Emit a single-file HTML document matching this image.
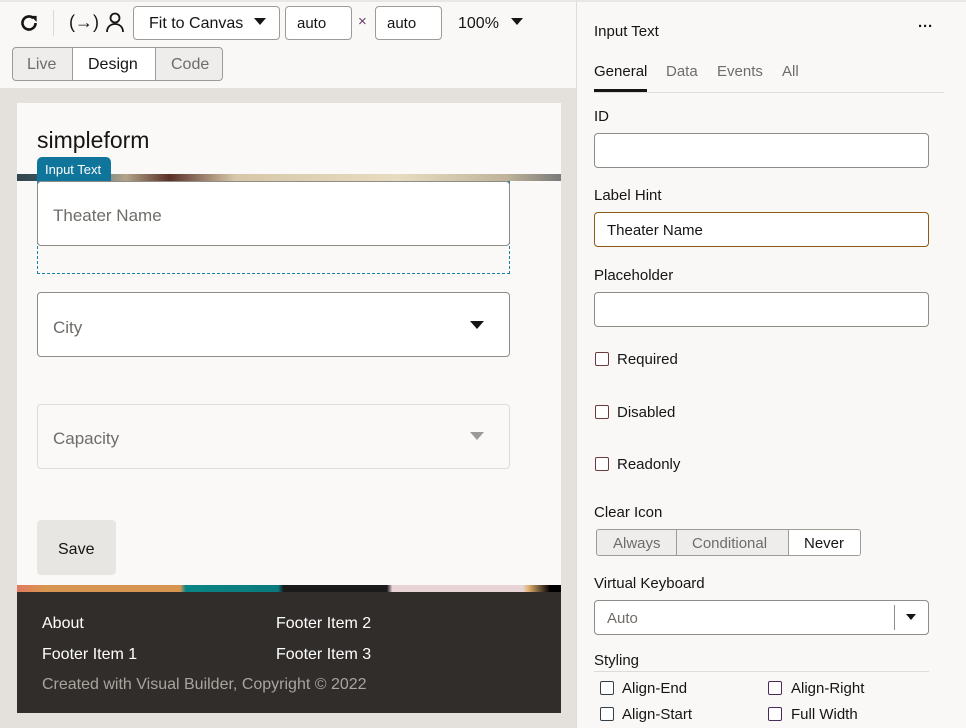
<!DOCTYPE html>
<html><head><meta charset="utf-8"><style>
*{box-sizing:border-box;margin:0;padding:0}
body{width:966px;height:728px;overflow:hidden;font-family:"Liberation Sans",sans-serif;background:#e4e1dc;position:relative;color:#161513}
.a{position:absolute}
.inp{position:absolute;background:#fff;border:1px solid #8f8c88;border-radius:4px}
.t{position:absolute;white-space:nowrap;margin-top:1px}
.cb{position:absolute;width:14px;height:14px;border:1.5px solid #6b3a3a;border-radius:2px;background:#fff}
.cbl{position:absolute;font-size:15px;color:#161513;white-space:nowrap;margin-top:1px}
</style></head><body>
<!-- toolbar -->
<div class="a" style="left:0;top:0;width:576px;height:88px;background:#f9f8f6;border-top:2px solid #e9e7e4"></div>
<svg class="a" style="left:17px;top:11px" width="24" height="24" viewBox="0 0 22 22"><path d="M17 11a6 6 0 1 1-2-4.5" fill="none" stroke="#161513" stroke-width="2.4"/><path d="M12.5 4.5h5.5v5.5z" fill="#161513"/></svg>
<div class="a" style="left:53px;top:10px;width:1px;height:26px;background:#dcd9d5"></div>
<div class="t" style="left:69px;top:11px;font-size:18px">(→)</div>
<svg class="a" style="left:105px;top:11px" width="20" height="22" viewBox="0 0 20 22"><circle cx="10" cy="7" r="4.5" fill="none" stroke="#161513" stroke-width="1.8"/><path d="M2 21c0-5 3.5-8 8-8s8 3 8 8" fill="none" stroke="#161513" stroke-width="1.8"/></svg>
<div class="inp" style="left:133px;top:6px;width:147px;height:34px;border-color:#9e9b97"></div>
<div class="t" style="left:149px;top:14px;font-size:16px">Fit to Canvas</div>
<div class="a" style="left:254px;top:18px;border-left:6px solid transparent;border-right:6px solid transparent;border-top:7px solid #161513"></div>
<div class="inp" style="left:285px;top:6px;width:67px;height:34px;border-color:#9e9b97"></div>
<div class="t" style="left:297px;top:14px;font-size:15px">auto</div>
<div class="t" style="left:358px;top:12px;font-size:15px;color:#6b3a6b">×</div>
<div class="inp" style="left:375px;top:6px;width:67px;height:34px;border-color:#9e9b97"></div>
<div class="t" style="left:387px;top:14px;font-size:15px">auto</div>
<div class="t" style="left:458px;top:14px;font-size:16px">100%</div>
<div class="a" style="left:511px;top:18px;border-left:6px solid transparent;border-right:6px solid transparent;border-top:7px solid #161513"></div>
<div class="a" style="left:12px;top:47px;width:211px;height:34px;border:1px solid #9e9b97;border-radius:4px;background:#eeedeb;overflow:hidden">
<div class="a" style="left:59px;top:0;width:84px;height:32px;background:#fff;border-left:1px solid #9e9b97;border-right:1px solid #9e9b97"></div>
<div class="t" style="left:14px;top:7px;font-size:16px;color:#6f6c68">Live</div>
<div class="t" style="left:75px;top:7px;font-size:16px">Design</div>
<div class="t" style="left:158px;top:7px;font-size:16px;color:#6f6c68">Code</div>
</div>
<!-- canvas -->
<div class="a" style="left:17px;top:103px;width:544px;height:610px;background:#faf9f7"></div>
<div class="t" style="left:37px;top:126px;font-size:23px">simpleform</div>
<div class="a" style="left:17px;top:174px;width:544px;height:7px;background:linear-gradient(90deg,#33444c 0%,#4a6d7a 12%,#b3a489 20%,#5a3028 28%,#d6c7a8 40%,#e8dcc0 70%,#bfb39a 90%,#7a7a7a 100%)"></div>
<div class="a" style="left:37px;top:157px;width:74px;height:24px;background:#10759b;border-radius:5px 5px 0 0"></div>
<div class="t" style="left:45px;top:161px;font-size:13px;color:#fff">Input Text</div>
<div class="a" style="left:37px;top:181px;width:473px;height:93px;border:1px dashed #1a82a8"></div>
<div class="inp" style="left:37px;top:181px;width:473px;height:65px"></div>
<div class="t" style="left:53px;top:205px;font-size:17px;color:#6f6c68">Theater Name</div>
<div class="inp" style="left:37px;top:292px;width:473px;height:65px"></div>
<div class="t" style="left:53px;top:317px;font-size:17px;color:#6f6c68">City</div>
<div class="a" style="left:470px;top:321px;border-left:7px solid transparent;border-right:7px solid transparent;border-top:8px solid #161513"></div>
<div class="a" style="left:37px;top:404px;width:473px;height:65px;border:1px solid #dedcd9;border-radius:4px;background:#faf9f7"></div>
<div class="t" style="left:53px;top:428px;font-size:17px;color:#6f6c68">Capacity</div>
<div class="a" style="left:470px;top:432px;border-left:7px solid transparent;border-right:7px solid transparent;border-top:8px solid #9c9a97"></div>
<div class="a" style="left:37px;top:520px;width:79px;height:55px;background:#e8e6e3;border-radius:4px"></div>
<div class="t" style="left:58px;top:540px;font-size:16px">Save</div>
<div class="a" style="left:17px;top:585px;width:544px;height:8px;background:linear-gradient(90deg,#e07a5f 0%,#d89550 5%,#d89550 30%,#0a8585 31%,#0a7a7d 48%,#1a1a1a 49%,#1a1a1a 68%,#e8d3d6 69%,#e8d3d6 93%,#e0b070 94%,#000 98%)"></div>
<div class="a" style="left:17px;top:592px;width:544px;height:121px;background:#312d2a"></div>
<div class="t" style="left:42px;top:614px;font-size:16px;color:#fff">About</div>
<div class="t" style="left:276px;top:614px;font-size:16px;color:#fff">Footer Item 2</div>
<div class="t" style="left:42px;top:645px;font-size:16px;color:#fff">Footer Item 1</div>
<div class="t" style="left:276px;top:645px;font-size:16px;color:#fff">Footer Item 3</div>
<div class="t" style="left:42px;top:675px;font-size:16px;color:#a8a49f">Created with Visual Builder, Copyright © 2022</div>
<!-- right panel -->
<div class="a" style="left:576px;top:0;width:390px;height:728px;background:#f9f8f6;border-left:1px solid #e0ddd9;border-top:2px solid #e9e7e4"></div>
<div class="t" style="left:594px;top:22px;font-size:15px">Input Text</div>
<div class="t" style="left:918px;top:17px;font-size:15px;font-weight:bold">···</div>
<div class="t" style="left:594px;top:62px;font-size:15px">General</div>
<div class="t" style="left:666px;top:62px;font-size:15px;color:#6f6c68">Data</div>
<div class="t" style="left:717px;top:62px;font-size:15px;color:#6f6c68">Events</div>
<div class="t" style="left:782px;top:62px;font-size:15px;color:#6f6c68">All</div>
<div class="a" style="left:594px;top:92px;width:350px;height:1px;background:#dedcd9"></div>
<div class="a" style="left:594px;top:89px;width:53px;height:3px;background:#161513"></div>
<div class="t" style="left:594px;top:107px;font-size:15px">ID</div>
<div class="inp" style="left:594px;top:133px;width:335px;height:35px"></div>
<div class="t" style="left:594px;top:186px;font-size:15px">Label Hint</div>
<div class="inp" style="left:594px;top:212px;width:335px;height:35px;border-color:#8c5a14"></div>
<div class="t" style="left:607px;top:221px;font-size:15px">Theater Name</div>
<div class="t" style="left:594px;top:266px;font-size:15px">Placeholder</div>
<div class="inp" style="left:594px;top:292px;width:335px;height:35px"></div>
<div class="cb" style="left:595px;top:352px"></div><div class="cbl" style="left:617px;top:350px">Required</div>
<div class="cb" style="left:595px;top:405px"></div><div class="cbl" style="left:617px;top:403px">Disabled</div>
<div class="cb" style="left:595px;top:457px"></div><div class="cbl" style="left:617px;top:455px">Readonly</div>
<div class="t" style="left:594px;top:503px;font-size:15px">Clear Icon</div>
<div class="a" style="left:596px;top:529px;width:265px;height:27px;border:1px solid #9e9b97;border-radius:3px;background:#eeedeb;overflow:hidden">
<div class="a" style="left:79px;top:0;width:113px;height:25px;border-left:1px solid #9e9b97;border-right:1px solid #9e9b97"></div>
<div class="a" style="left:192px;top:0;width:72px;height:25px;background:#fff"></div>
<div class="t" style="left:16px;top:4px;font-size:15px;color:#6f6c68">Always</div>
<div class="t" style="left:95px;top:4px;font-size:15px;color:#6f6c68">Conditional</div>
<div class="t" style="left:207px;top:4px;font-size:15px">Never</div>
</div>
<div class="t" style="left:594px;top:574px;font-size:15px">Virtual Keyboard</div>
<div class="inp" style="left:594px;top:600px;width:335px;height:35px"></div>
<div class="t" style="left:607px;top:609px;font-size:15px;color:#6f6c68">Auto</div>
<div class="a" style="left:894px;top:605px;width:1px;height:25px;background:#8f8c88"></div>
<div class="a" style="left:906px;top:614px;border-left:5px solid transparent;border-right:5px solid transparent;border-top:6px solid #161513"></div>
<div class="t" style="left:594px;top:651px;font-size:15px">Styling</div>
<div class="a" style="left:594px;top:671px;width:335px;height:1px;background:#dedcd9"></div>
<div class="cb" style="left:600px;top:681px;border-color:#33404c"></div><div class="cbl" style="left:622px;top:679px">Align-End</div>
<div class="cb" style="left:768px;top:681px;border-color:#4a2a5a"></div><div class="cbl" style="left:791px;top:679px">Align-Right</div>
<div class="cb" style="left:600px;top:707px;border-color:#33404c"></div><div class="cbl" style="left:622px;top:705px">Align-Start</div>
<div class="cb" style="left:768px;top:707px;border-color:#4a2a5a"></div><div class="cbl" style="left:791px;top:705px">Full Width</div>
</body></html>
